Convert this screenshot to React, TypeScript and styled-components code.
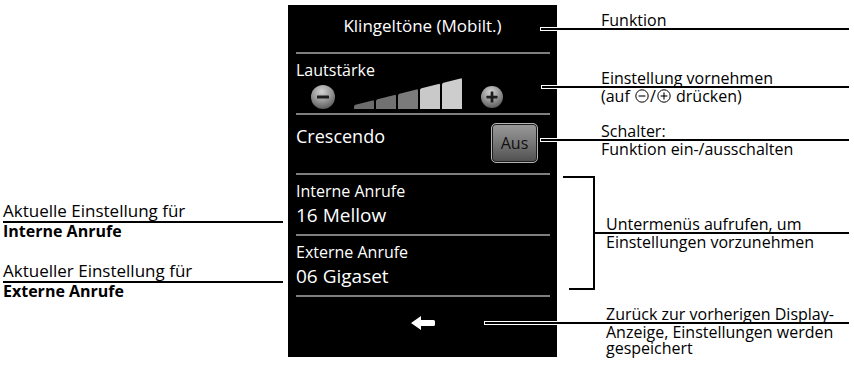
import React from 'react';
import styled, { createGlobalStyle } from 'styled-components';

const GlobalStyle = createGlobalStyle`
  html, body {
    margin: 0;
    padding: 0;
    background: #fff;
  }
  body {
    font-family: 'Open Sans', 'Noto Sans', sans-serif;
    color: #000;
  }
`;

const RoundKey = ({ size, plus }: { size: number; plus?: boolean }) => {
  const id = plus ? 'key-plus' : 'key-minus';
  return (
    <svg width={size} height={size} viewBox='0 0 24 24'>
      <defs>
        <radialGradient id={id} cx='45%' cy='28%' r='80%'>
          <stop offset='0' stopColor='#d2d2d2' />
          <stop offset='0.5' stopColor='#979797' />
          <stop offset='1' stopColor='#4e4e4e' />
        </radialGradient>
      </defs>
      <circle cx='12' cy='12' r='12' fill={`url(#${id})`} />
      <rect x='6' y='10.5' width='12' height='3' rx='0.6' fill='#1e1e1e' />
      {plus && <rect x='10.5' y='6' width='3' height='12' rx='0.6' fill='#1e1e1e' />}
    </svg>
  );
};

const LevelBars = () => {
  const colors = ['#6c6c6c', '#717171', '#7b7b7b', '#c9c9c9', '#cdcdcd'];
  const ramp = (x: number) => 27 - x * 0.25;
  const r = 1.5;
  return (
    <svg width={108} height={32} viewBox='0 0 108 32'>
      {colors.map((c, i) => {
        const x0 = i * 22;
        const x1 = x0 + 20;
        const yl = ramp(x0);
        const yr = ramp(x1);
        const d = `M${x0},31 V${yl + r} Q${x0},${yl} ${x0 + r},${yl - r * 0.25} L${x1 - r},${yr + r * 0.25} Q${x1},${yr} ${x1},${yr + r} V31 Z`;
        return <path key={i} d={d} fill={c} />;
      })}
    </svg>
  );
};

const BackArrow = () => (
  <svg width={24} height={14} viewBox='0 0 24 14'>
    <path d='M0,7 L10,0 V4 H22.5 Q24,4 24,5.5 V8.5 Q24,10 22.5,10 H10 V14 Z' fill='#fff' />
  </svg>
);

const TinyKey = ({ plus }: { plus?: boolean }) => (
  <svg width={14} height={14} viewBox='0 0 14 14'>
    <circle cx='7' cy='7' r='6.2' fill='none' stroke='#000' strokeWidth='1' />
    <line x1='3.6' y1='7' x2='10.4' y2='7' stroke='#000' strokeWidth='1.1' />
    {plus && <line x1='7' y1='3.6' x2='7' y2='10.4' stroke='#000' strokeWidth='1.1' />}
  </svg>
);

const App = () => {
  return (
    <>
      <GlobalStyle />
      <Page>
        <LeftColumn>
          <Note>
            <NoteHead $pad={2}>Aktuelle Einstellung für</NoteHead>
            <NoteStrong>Interne Anrufe</NoteStrong>
          </Note>
          <Note>
            <NoteHead $pad={2}>Aktueller Einstellung für</NoteHead>
            <NoteStrong>Externe Anrufe</NoteStrong>
          </Note>
        </LeftColumn>

        <Screen>
          <TitleBar>Klingeltöne (Mobilt.)</TitleBar>
          <Divider />
          <VolumePanel>
            <PanelLabel>Lautstärke</PanelLabel>
            <VolumeRow>
              <KeySlot $gap={15} $size={24}>
                <RoundKey size={24} />
              </KeySlot>
              <BarSlot>
                <LevelBars />
              </BarSlot>
              <KeySlot $gap={19} $size={22}>
                <RoundKey size={22} plus />
              </KeySlot>
            </VolumeRow>
          </VolumePanel>
          <Divider />
          <ToggleRow>
            <ToggleLabel>Crescendo</ToggleLabel>
            <ToggleButton>Aus</ToggleButton>
          </ToggleRow>
          <Divider />
          <MenuItem>
            <PanelLabel>Interne Anrufe</PanelLabel>
            <MenuValue>16 Mellow</MenuValue>
          </MenuItem>
          <Divider />
          <MenuItem>
            <PanelLabel>Externe Anrufe</PanelLabel>
            <MenuValue>06 Gigaset</MenuValue>
          </MenuItem>
          <Divider />
          <BackBar>
            <BackArrow />
          </BackBar>
        </Screen>

        <RightColumn>
          <Callout $top={0}>
            <CalloutHead $indent={44} $lead={16}>Funktion</CalloutHead>
          </Callout>
          <Callout $top={40}>
            <CalloutHead $indent={44} $lead={15}>Einstellung vornehmen</CalloutHead>
            <CalloutLine $indent={44}>
              (auf <TinyKey />/<TinyKey plus /> drücken)
            </CalloutLine>
          </Callout>
          <Callout $top={19}>
            <CalloutHead $indent={44} $lead={16}>Schalter:</CalloutHead>
            <CalloutLine $indent={44}>Funktion ein-/ausschalten</CalloutLine>
          </Callout>
          <BracketGroup>
            <Bracket />
            <Callout $top={0}>
              <CalloutHead $indent={11}>Untermenüs aufrufen, um</CalloutHead>
              <CalloutLine $indent={11}>Einstellungen vorzunehmen</CalloutLine>
            </Callout>
          </BracketGroup>
          <Callout $top={16}>
            <CalloutHead $indent={49} $lead={72}>Zurück zur vorherigen Display-</CalloutHead>
            <CalloutLine $indent={49}>Anzeige, Einstellungen werden</CalloutLine>
            <CalloutLine $indent={49}>gespeichert</CalloutLine>
          </Callout>
        </RightColumn>
      </Page>
    </>
  );
};

export default App;

const Page = styled.div`
  display: flex;
  align-items: flex-start;
  width: 854px;
  height: 365px;
  overflow: hidden;
  background: #fff;
`;

/* left notes */

const LeftColumn = styled.aside`
  display: flex;
  flex-direction: column;
  gap: 24px;
  width: 288px;
  flex-shrink: 0;
  box-sizing: border-box;
  padding: 203px 0 0 3px;
`;

const Note = styled.div`
  display: flex;
  flex-direction: column;
  width: 280px;
`;

const NoteHead = styled.div<{ $pad?: number }>`
  font-size: 17px;
  line-height: 16px;
  white-space: nowrap;
  padding-bottom: ${({ $pad }) => $pad ?? 0}px;
  border-bottom: 2px solid #000;
`;

const NoteStrong = styled.div`
  font-size: 16px;
  line-height: 16px;
  font-weight: 700;
  white-space: nowrap;
`;

/* phone display */

const Screen = styled.section`
  display: flex;
  flex-direction: column;
  flex-shrink: 0;
  width: 269px;
  height: 352px;
  margin-top: 5px;
  background: #000;
  color: #fff;
`;

const Divider = styled.div`
  flex-shrink: 0;
  height: 2px;
  margin: 0 7px 0 8px;
  background: #7f7f7f;
`;

const TitleBar = styled.div`
  box-sizing: border-box;
  height: 47px;
  padding-top: 11px;
  text-align: center;
  font-size: 17px;
  line-height: 20px;
`;

const VolumePanel = styled.div`
  display: flex;
  flex-direction: column;
  box-sizing: border-box;
  height: 59px;
  padding: 8px 8px 0;
`;

const PanelLabel = styled.div`
  font-size: 16px;
  line-height: 16px;
  white-space: nowrap;
`;

const VolumeRow = styled.div`
  display: flex;
  align-items: flex-end;
  height: 32px;
`;

const KeySlot = styled.div<{ $gap: number; $size: number }>`
  display: flex;
  width: ${({ $size }) => $size}px;
  height: ${({ $size }) => $size}px;
  margin-left: ${({ $gap }) => $gap}px;
  margin-bottom: ${({ $size }) => 13 - $size / 2}px;
`;

const BarSlot = styled.div`
  display: flex;
  margin-left: 19px;
`;

const ToggleRow = styled.div`
  display: flex;
  justify-content: space-between;
  align-items: flex-start;
  box-sizing: border-box;
  height: 58px;
  padding: 8px 19px 0 8px;
`;

const ToggleLabel = styled.div`
  margin-top: 3px;
  font-size: 18px;
  line-height: 20px;
`;

const ToggleButton = styled.div`
  display: flex;
  align-items: center;
  justify-content: center;
  box-sizing: border-box;
  width: 47px;
  height: 40px;
  border: 1px solid #b4b4b4;
  border-radius: 5px;
  box-shadow: inset 0 0 0 1px #1c1c1c;
  background: linear-gradient(180deg, #9a9a9a 0%, #7b7b7b 45%, #4f4f4f 100%);
  color: #111;
  font-size: 16px;
  line-height: 16px;
`;

const MenuItem = styled.div`
  display: flex;
  flex-direction: column;
  box-sizing: border-box;
  height: 59px;
  padding: 8px 8px 0;
`;

const MenuValue = styled.div`
  margin-top: 5px;
  font-size: 19px;
  line-height: 22px;
  white-space: nowrap;
`;

const BackBar = styled.div`
  display: flex;
  justify-content: center;
  box-sizing: border-box;
  flex: 1;
  padding-top: 19px;
`;

/* right callouts */

const RightColumn = styled.aside`
  display: flex;
  flex-direction: column;
  width: 292px;
  flex-shrink: 0;
  box-sizing: border-box;
  padding-top: 12px;
`;

const Callout = styled.div<{ $top: number }>`
  display: flex;
  flex-direction: column;
  flex: 1;
  margin-top: ${({ $top }) => $top}px;
`;

const CalloutHead = styled.div<{ $indent: number; $lead?: number }>`
  position: relative;
  padding-left: ${({ $indent }) => $indent}px;
  font-size: 16px;
  line-height: 16px;
  white-space: nowrap;
  border-bottom: 2px solid #000;

  ${({ $lead }) =>
    $lead
      ? `
    &::before {
      content: '';
      position: absolute;
      right: 100%;
      bottom: -3px;
      width: ${$lead}px;
      height: 2px;
      background: #000;
      border: 1px solid #fff;
      border-right: none;
    }
  `
      : ''}
`;

const CalloutLine = styled.div<{ $indent: number }>`
  display: flex;
  align-items: center;
  gap: 1px;
  padding-left: ${({ $indent }) => $indent}px;
  font-size: 16px;
  line-height: 16px;
  white-space: pre;
`;

const BracketGroup = styled.div`
  display: flex;
  align-items: center;
  margin-top: 19px;
`;

const Bracket = styled.div`
  position: relative;
  flex-shrink: 0;
  box-sizing: border-box;
  width: 32px;
  height: 114px;
  margin-left: 6px;
  border-top: 2px solid #000;
  border-right: 2px solid #000;

  &::after {
    content: '';
    position: absolute;
    left: 6px;
    right: 0;
    bottom: 0;
    height: 2px;
    background: #000;
  }
`;
